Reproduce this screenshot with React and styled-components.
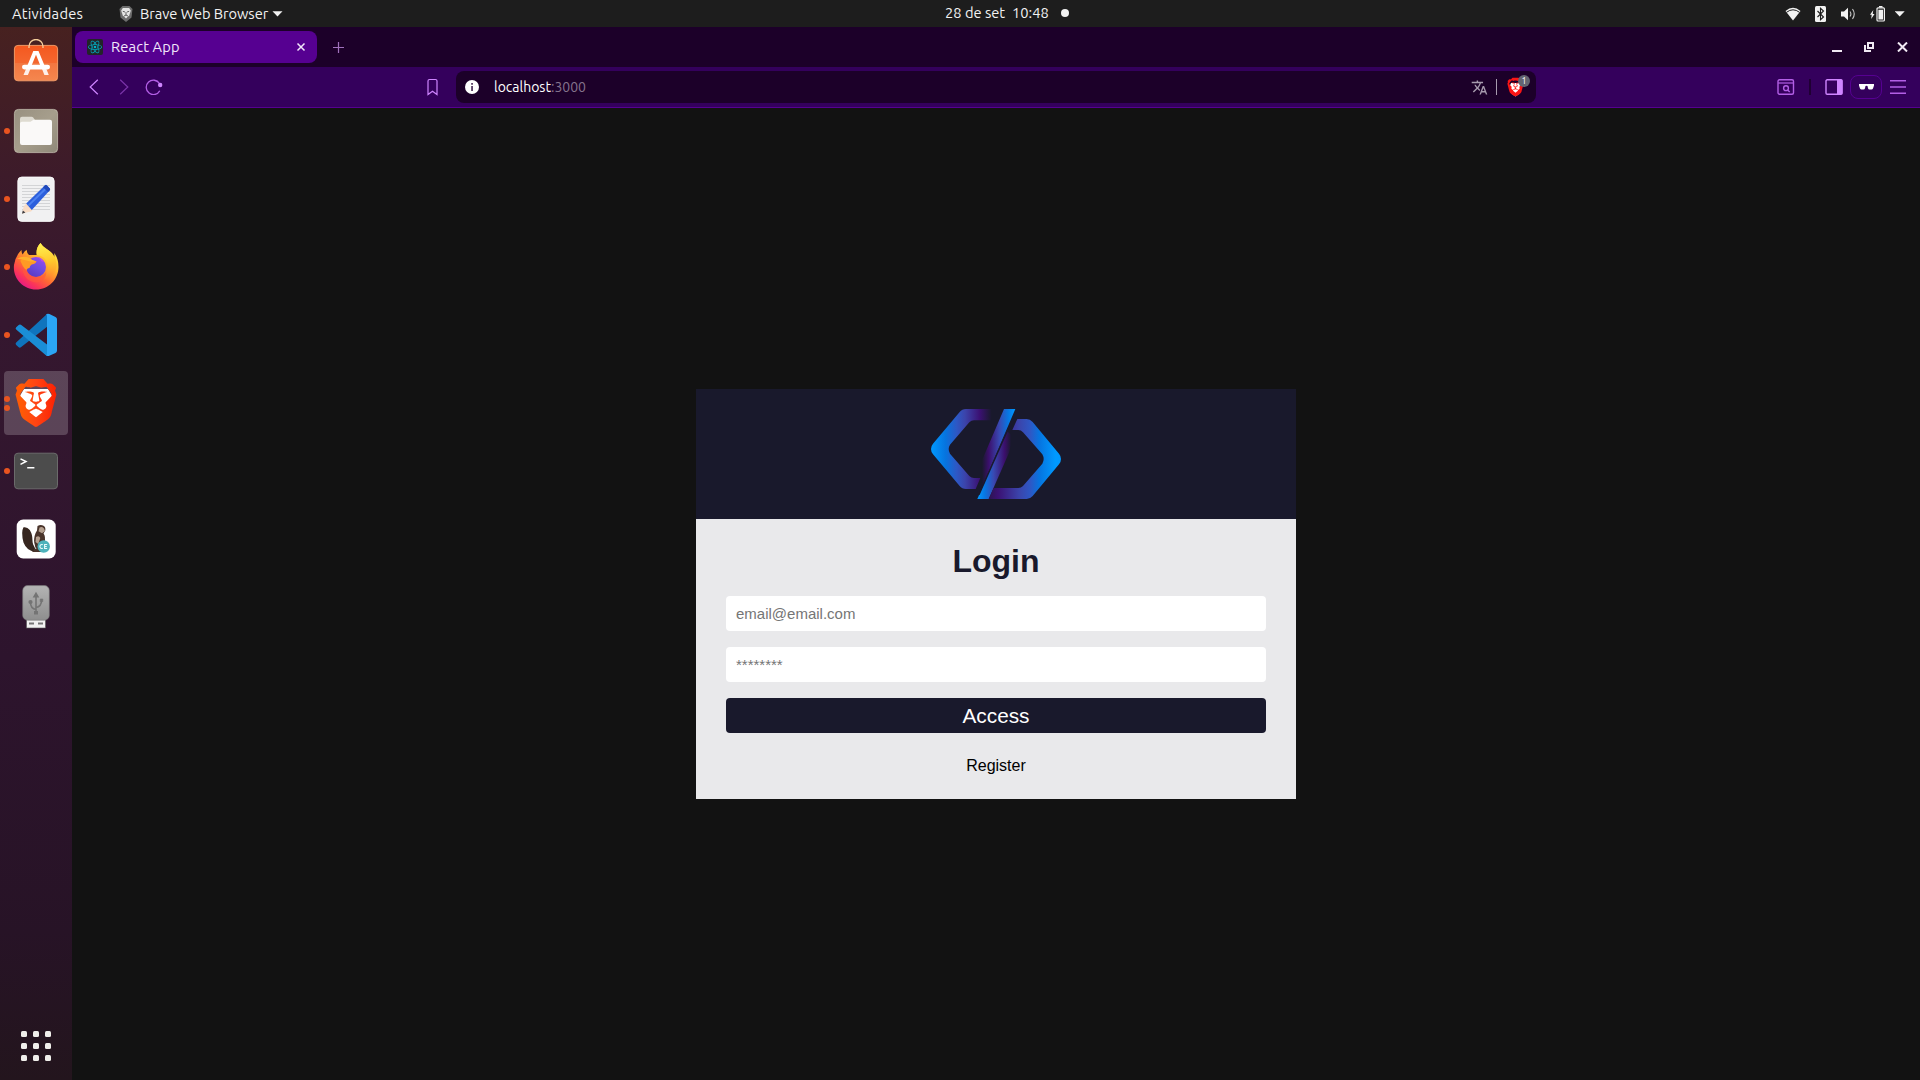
import React from "react";
import styled, { createGlobalStyle } from "styled-components";
import { SiBrave, SiReact } from "react-icons/si";
import { MdTranslate } from "react-icons/md";

const uiFont = `Ubuntu, "Open Sans", "Noto Sans", sans-serif`;

const GlobalStyle = createGlobalStyle`
  * { box-sizing: border-box; }
  body { margin: 0; background: #121212; overflow: hidden; }
  svg { display: block; flex: none; }
`;

const Desktop = styled.div`
  display: flex;
  flex-direction: column;
  width: 1920px;
  height: 1080px;
  overflow: hidden;
  font-family: ${uiFont};
  font-size: 14px;
`;

const TopBar = styled.header`
  display: grid;
  grid-template-columns: 945px 1fr auto;
  align-items: center;
  height: 27px;
  flex: none;
  padding-right: 15px;
  background: #1d1d1d;
  color: #f2f2f2;
  font-size: 14.667px;
`;

const TopGroup = styled.div`
  display: flex;
  align-items: center;
  height: 27px;
  padding-left: ${(p) => p.$inset || 0}px;
  padding-bottom: ${(p) => p.$raise || 0}px;
  gap: ${(p) => p.$gap || 0}px;
`;

const Label = styled.span`
  width: ${(p) => (p.$w ? `${p.$w}px` : "auto")};
  margin-left: ${(p) => p.$before || 0}px;
  letter-spacing: ${(p) => p.$track || 0}px;
  color: ${(p) => p.$color || "inherit"};
  line-height: 20px;
  white-space: nowrap;
`;

const Dot = styled.i`
  width: ${(p) => p.$size}px;
  height: ${(p) => p.$size}px;
  border-radius: 50%;
  background: ${(p) => p.$color};
`;

const BatteryMenu = styled.div`
  display: flex;
  align-items: center;
  gap: 10px;
`;

const Workspace = styled.div`
  display: flex;
  flex: 1;
  min-height: 0;
`;

const Dock = styled.nav`
  display: flex;
  flex-direction: column;
  gap: 4px;
  width: 72px;
  flex: none;
  padding: 4px 4px 19px;
  background: linear-gradient(#472120 0%, #3d1b2a 14%, #35172f 28%, #2d142d 60%, #271326 86%, #23151d 100%);
`;

const DockItem = styled.div`
  display: grid;
  grid-template-columns: 8px 48px;
  align-items: center;
  height: 64px;
  border-radius: 4px;
  background: ${(p) => (p.$active ? "rgba(255,255,255,0.2)" : "transparent")};
`;

const Marks = styled.div`
  display: flex;
  flex-direction: column;
  gap: 3px;
`;

const AppsGrid = styled.div`
  display: grid;
  grid-template-columns: repeat(3, 6px);
  gap: 6px;
  margin: auto 0 0 17px;
`;

const AppsCell = styled.i`
  height: 6px;
  border-radius: 1.5px;
  background: #f0efeb;
`;

const BrowserWindow = styled.main`
  display: flex;
  flex-direction: column;
  flex: 1;
`;

const TabStrip = styled.div`
  display: flex;
  align-items: center;
  height: 40px;
  padding: 0 12px 0 3px;
  background: #1c0029;
`;

const Tab = styled.div`
  display: flex;
  align-items: center;
  width: 242px;
  height: 32px;
  padding: 0 11px 0 12px;
  gap: 8px;
  border-radius: 8px;
  background: #560091;
  color: #f3e8fb;
  font-size: 14.667px;
`;

const Favicon = styled.div`
  display: grid;
  place-items: center;
  width: 16px;
  height: 16px;
  border-radius: 2px;
  background: #222429;
  color: #00b3c8;
`;

const Push = styled.div`
  flex: 1;
`;

const NewTab = styled.div`
  margin-left: 16px;
`;

const WindowControls = styled.div`
  display: flex;
  gap: 22px;
  margin-left: auto;
`;

const Toolbar = styled.div`
  display: flex;
  align-items: center;
  height: 41px;
  padding: 0 14px 0 14px;
  border-bottom: 1px solid #560091;
  background: #34005c;
`;

const NavButtons = styled.div`
  display: flex;
  gap: 13.5px;
  width: 330px;
`;

const Bookmark = styled.div`
  width: 40px;
  padding-left: 10px;
`;

const AddressBar = styled.div`
  display: flex;
  align-items: center;
  width: 1080px;
  height: 32px;
  padding: 0 4px 0 9px;
  border-radius: 8px;
  background: #1c0029;
  color: #fff;
`;

const Host = styled.div`
  display: flex;
  flex: 1;
  padding-left: 15px;
`;

const Divider = styled.i`
  width: ${(p) => p.$w}px;
  height: 16px;
  margin: 0 ${(p) => p.$after}px 0 ${(p) => p.$before}px;
  background: ${(p) => p.$color};
`;

const Shield = styled.div`
  position: relative;
  width: 28px;
  height: 24px;
`;

const ShieldBadge = styled.span`
  position: absolute;
  top: 0;
  left: 14px;
  width: 12px;
  height: 12px;
  border-radius: 50%;
  background: #636571;
  color: #fff;
  font-size: 9px;
  line-height: 12px;
  text-align: center;
`;

const ToolButtons = styled.div`
  display: flex;
  align-items: center;
  margin-left: auto;
`;

const PrivateBadge = styled.div`
  display: grid;
  place-items: center;
  width: 32px;
  height: 24px;
  margin: 0 8px 0 7px;
  border: 1px solid #560091;
  border-radius: 8px;
`;

const Page = styled.section`
  display: flex;
  align-items: center;
  justify-content: center;
  flex: 1;
  background: #121212;
  font-family: Arial, "Liberation Sans", sans-serif;
`;

const Card = styled.div`
  width: 600px;
  background: #e9e9eb;
`;

const CardHeader = styled.div`
  display: flex;
  align-items: center;
  justify-content: center;
  height: 130px;
  background: #19192c;
`;

const Form = styled.form`
  display: flex;
  flex-direction: column;
  height: 280px;
  padding: 24px 30px 0;
  gap: 16px;
`;

const Title = styled.h1`
  margin: 0;
  height: 37px;
  color: #19192c;
  font-size: 32px;
  line-height: 37px;
  font-weight: 700;
  text-align: center;
`;

const Field = styled.input`
  height: 35px;
  padding: 0 10px;
  border: 0;
  border-radius: 4px;
  outline: 0;
  background: #fff;
  font: 15px Arial, "Liberation Sans", sans-serif;
  &::placeholder { color: #757575; }
`;

const Submit = styled.button`
  height: 35px;
  padding: 0;
  border: 0;
  border-radius: 4px;
  background: #19192c;
  color: #fff;
  font: 20.8px Arial, "Liberation Sans", sans-serif;
`;

const RegisterLink = styled.a`
  margin-top: 8px;
  color: #000;
  font-size: 16px;
  line-height: 18px;
  text-align: center;
`;

const Icon = ({ w, h = w, box, children, ...rest }) => (
  <svg width={w} height={h} viewBox={box || `0 0 ${w} ${h}`} fill="none" {...rest}>
    {children}
  </svg>
);

const SoftwareIcon = () => (
  <Icon w={48}>
    <defs>
      <linearGradient id="soft" x1="0" y1="0" x2="0" y2="1">
        <stop offset="0" stopColor="#f4581f" />
        <stop offset="0.5" stopColor="#f4672f" />
        <stop offset="0.5" stopColor="#f27640" />
        <stop offset="1" stopColor="#f5874f" />
      </linearGradient>
    </defs>
    <rect x="2.4" y="6.4" width="43.2" height="35.4" rx="3.5" fill="url(#soft)" stroke="#f8a26c" strokeWidth="0.9" />
    <path d="M17 9V7.500a7 7 0 0 1 14 0V9" stroke="#f6cf9c" strokeWidth="1.300" />
    <path d="M21.3 12h5.2l5.8 14h-4.2L24 15.8 19.8 26h-4.2z" fill="#fff" />
    <path d="M14 30h4.4l-2.5 6h-4.4zM30 30h4.4l2.4 6h-4.4z" fill="#fff" fillOpacity=".88" />
    <rect x="10" y="25.8" width="28" height="4.6" rx="2.3" fill="#fff" />
  </Icon>
);

const FilesIcon = () => (
  <Icon w={48}>
    <defs>
      <linearGradient id="files" x1="0" y1="0" x2="1" y2="1">
        <stop offset="0" stopColor="#989080" />
        <stop offset="0.5" stopColor="#a69e8c" />
        <stop offset="1" stopColor="#8f8979" />
      </linearGradient>
    </defs>
    <rect x="2.4" y="2.4" width="43.2" height="43.2" rx="4" fill="url(#files)" stroke="#c3bdad" strokeWidth="0.8" />
    <path d="M8 17v-5.2Q8 9.8 10 9.8h9.5q1.2 0 1.9.9l1.6 2.3v4z" fill="#dedbd1" />
    <path d="M8 16.5q0-1.8 2-1.8h8.500l3-1.900H38q2 0 2 2V36q0 2-2 2H10q-2 0-2-2z" fill="#faf9f8" />
  </Icon>
);

const EditorIcon = () => (
  <Icon w={48}>
    <rect x="5.8" y="2" width="36.4" height="44.4" rx="4" fill="#f1f1f2" stroke="#fff" strokeWidth="0.8" />
    <path d="M10 10.5h28M10 13.5h28M10 16.5h28M10 19.5h28M10 22.5h28M10 25.5h28M10 28.5h28M10 31.5h28M10 34.5h28" stroke="#cfd0d2" strokeWidth="0.9" />
    <path d="M10 38.8l1.8-7.6L20 36z" fill="#f8dcc5" />
    <path d="M12 31l5.8 5.8 2.6-1.6-5.7-6.8z" fill="#f8dcc5" />
    <path d="M10 38.8l.8-3.2 2.6 2z" fill="#3c3c42" />
    <path d="M14.2 28.6L33 10.2q1.1-.8 2 .2l2.8 3q.8 1-.2 2L19.8 35z" fill="#2c5fdc" />
    <path d="M16.3 30.6L35.5 12" stroke="#4b80f0" strokeWidth="2" />
    <path d="M31 12.2l1.8-1.8q1.2-1 2.2 0l2.8 3q.8 1-.2 2L36 17z" fill="#1f48ba" />
  </Icon>
);

const FirefoxIcon = () => (
  <Icon w={48}>
    <defs>
      <linearGradient id="ffBody" x1="38" y1="6" x2="10" y2="44" gradientUnits="userSpaceOnUse">
        <stop offset="0" stopColor="#ffe843" />
        <stop offset="0.3" stopColor="#ffb52c" />
        <stop offset="0.58" stopColor="#ff6a33" />
        <stop offset="0.8" stopColor="#fb3658" />
        <stop offset="1" stopColor="#e3168b" />
      </linearGradient>
      <linearGradient id="ffTail" x1="32" y1="0" x2="38" y2="38" gradientUnits="userSpaceOnUse">
        <stop offset="0" stopColor="#fff251" />
        <stop offset="0.5" stopColor="#ffc72c" />
        <stop offset="1" stopColor="#ff7a2c" stopOpacity="0" />
      </linearGradient>
      <linearGradient id="ffGlobe" x1="30" y1="14" x2="18" y2="34" gradientUnits="userSpaceOnUse">
        <stop offset="0" stopColor="#9a4bf0" />
        <stop offset="0.5" stopColor="#6b4be0" />
        <stop offset="1" stopColor="#5a39c0" />
      </linearGradient>
    </defs>
    <path d="M28.500 0C25 3.500 24 8 24.800 12L17 12Q14.500 9.500 14.800 6.800Q12.400 8.200 10.600 11.400Q9.200 9 9.600 6.800Q3 13.500 2 22C.5 35 11 46.500 24 46.500C37 46.500 46.500 36 46.500 24Q46.500 15.500 42.200 10Q42.600 12.500 42 15Q39.500 8.500 34.500 5.800Q30.500 3.500 28.500 0Z" fill="url(#ffBody)" />
    <path d="M28.500 0C25 3.500 24 8 24.800 12Q33.500 13 35.800 21Q37.500 31 29 36.500Q43 36 44.600 23Q44.500 12 36 7Q30.500 4 28.500 0Z" fill="url(#ffTail)" />
    <circle cx="24" cy="24" r="10" fill="url(#ffGlobe)" />
    <path d="M25 14Q29.500 14.500 32 19L29.500 18.200Q28.500 15.500 25 14Z" fill="#c04ae8" />
    <path d="M8.300 17.800Q12 13.500 17.500 14.800Q19.500 17.500 24.500 18.200Q24.300 20.500 19.700 21.500Q17.800 22.500 17.500 25Q14.800 25 14.500 28Q10.500 24 8.300 17.800Z" fill="#ff9a24" />
    <path d="M5 16Q10 12 17.500 14.800Q19.500 17.500 24.500 18.200Q18 19 14.500 17.500Q9 15.500 5 16Z" fill="#ffb12b" />
    <path d="M14.300 26Q17 34.500 25 34.500Q31 34.300 34 29Q34.500 38 25 39.500Q12.500 39 10.500 26Z" fill="#ff5a3c" fillOpacity=".6" />
  </Icon>
);

const CodeIcon = () => (
  <Icon w={48}>
    <path d="M35 3L4.200 31.500q-1.300 1.200 0 2.400l2.500 2.300q1 .9 2.200.1L45 8z" fill="#0f74bd" />
    <path d="M4.200 16.200l2.500-2.300q1-.9 2.200-.1L37 35v10q-2 .4-3.500-1L4.200 18.500q-1.200-1.100 0-2.300z" fill="#1a8ed6" />
    <path d="M34 3.500q1.500-1.200 3.400-.4L43.500 6Q45 6.800 45 8.500v31q0 1.700-1.500 2.400l-6.200 2.900q-2 .8-3.500-.7 1.200.4 1.200-1.500V5.400q0-2.200-1-1.900z" fill="#2ba5f5" />
  </Icon>
);

const BraveIcon = () => (
  <Icon w={48}>
    <defs>
      <linearGradient id="brave" x1="0" y1="0" x2="24" y2="0" gradientUnits="userSpaceOnUse">
        <stop offset="0.2" stopColor="#ff5a06" />
        <stop offset="0.5" stopColor="#ff4414" />
        <stop offset="0.9" stopColor="#fb2303" />
      </linearGradient>
    </defs>
    <path d="M12 10h24l6 10-5 18-13 7-13-7-5-18z" fill="#fff" />
    <SiBrave size={48} fill="url(#brave)" strokeWidth="0" />
  </Icon>
);

const TerminalIcon = () => (
  <Icon w={48}>
    <rect x="2.500" y="6.200" width="43" height="35.600" rx="3.500" fill="#4c4c4c" stroke="#6b6b6b" />
    <path d="M8.500 11.800l5.500 2.700-5.500 2.800M15.200 20.700h7.200" stroke="#fff" strokeWidth="1.500" />
  </Icon>
);

const BeaverIcon = () => (
  <Icon w={48}>
    <rect x="4.700" y="4.500" width="39" height="39" rx="6.500" fill="#fff" />
    <path d="M11.500 12.300Q15 11.500 17.800 15Q20.800 20 20.500 26Q20.500 30 24.500 34.500L23 37Q14.500 35.500 11.500 27.500Q8.800 17 11.500 12.300Z" fill="#36261f" />
    <path d="M25.500 11Q28.500 9.200 31.500 10.700Q33.800 12 33.300 15.500L31.500 18.500Q34 22 32.500 27L29 37H20Q24.500 33.500 22 28Q21.800 20 25 15.500Z" fill="#49342b" />
    <path d="M27.500 12.500q2.500-1.200 4.500 1l1 2.500-3 2.200-3.500-2zM24 22q3-2 4.300 1l-2 6-2.800-2z" fill="#b5a08f" />
    <path d="M21.700 18Q20.500 23 22 29Q22.500 32 24 34" stroke="#fff" strokeWidth="0.800" />
    <circle cx="31.700" cy="31.500" r="6.200" fill="#4db2bb" />
    <path d="M30.800 29.700a2 2 0 1 0 0 3.600M35.200 29.500h-2.600v4h2.600M32.600 31.500h2.200" stroke="#e8fafa" strokeWidth="1.100" />
  </Icon>
);

const UsbIcon = () => (
  <Icon w={48}>
    <defs>
      <linearGradient id="usb" x1="0" y1="0" x2="0" y2="1">
        <stop offset="0" stopColor="#b4b4b4" />
        <stop offset="1" stopColor="#8e8e8e" />
      </linearGradient>
    </defs>
    <rect x="14.500" y="35" width="19" height="10" fill="#f2f2f2" stroke="#555" strokeWidth="0.600" />
    <path d="M17 40.500h5M26 40.500h5" stroke="#777" strokeWidth="1.800" />
    <rect x="10.700" y="2.600" width="26.600" height="34.600" rx="5" fill="url(#usb)" stroke="#777" strokeWidth="0.600" />
    <g stroke="#747474" strokeWidth="1.600">
      <path d="M24 12v17M24 26.500q-5.500-1-5.500-7M24 24.500q5.500-1 5.500-7" />
      <circle cx="18.500" cy="19" r="1.300" fill="#747474" />
      <path d="M28.200 16h2.600v2.600h-2.600z" fill="#747474" strokeWidth=".6" />
    </g>
    <path d="M24 8.800l3.300 5.700h-6.600zM22 28h4v3.500h-4z" fill="#747474" />
  </Icon>
);

const dockApps = [
  { icon: SoftwareIcon, windows: 0 },
  { icon: FilesIcon, windows: 1 },
  { icon: EditorIcon, windows: 1 },
  { icon: FirefoxIcon, windows: 1 },
  { icon: CodeIcon, windows: 1 },
  { icon: BraveIcon, windows: 2, active: true },
  { icon: TerminalIcon, windows: 1 },
  { icon: BeaverIcon, windows: 0 },
  { icon: UsbIcon, windows: 0 },
];

const Logo = () => (
  <Icon w={130} h={90} box="63 42 390 270">
    <defs>
      <linearGradient id="lgLeft" x1="63" y1="0" x2="245" y2="0" gradientUnits="userSpaceOnUse">
        <stop offset="0" stopColor="#0099ff" />
        <stop offset="0.24" stopColor="#0674df" />
        <stop offset="0.42" stopColor="#2d58c5" />
        <stop offset="0.56" stopColor="#3b44ab" />
        <stop offset="0.8" stopColor="#3b1173" />
        <stop offset="1" stopColor="#19192c" />
      </linearGradient>
      <linearGradient id="lgUp" x1="216" y1="0" x2="316" y2="0" gradientUnits="userSpaceOnUse">
        <stop offset="0" stopColor="#19192c" />
        <stop offset="0.2" stopColor="#3b0f6c" />
        <stop offset="0.52" stopColor="#3949b2" />
        <stop offset="0.78" stopColor="#0876e2" />
        <stop offset="1" stopColor="#0099ff" />
      </linearGradient>
      <linearGradient id="lgDown" x1="202" y1="0" x2="304" y2="0" gradientUnits="userSpaceOnUse">
        <stop offset="0" stopColor="#0099ff" />
        <stop offset="0.22" stopColor="#0876e2" />
        <stop offset="0.48" stopColor="#3949b2" />
        <stop offset="0.8" stopColor="#3b0f6c" />
        <stop offset="1" stopColor="#19192c" />
      </linearGradient>
      <linearGradient id="lgRight" x1="236" y1="0" x2="453" y2="0" gradientUnits="userSpaceOnUse">
        <stop offset="0" stopColor="#2c1450" />
        <stop offset="0.13" stopColor="#3b1173" />
        <stop offset="0.42" stopColor="#3b44ab" />
        <stop offset="0.58" stopColor="#2d58c5" />
        <stop offset="0.7" stopColor="#0674df" />
        <stop offset="0.92" stopColor="#0099ff" />
      </linearGradient>
    </defs>
    <path d="M245 42H168Q156 42 149 51L69 146Q63 153 63 162Q63 171 69 178L149 273Q156 282 168 282H197L211 249H192Q184 249 178 243L120 176Q112 162 120 149L178 82Q184 76 192 76H245Z" fill="url(#lgLeft)" />
    <path d="M282 42H316L210 290L216 250V196Z" fill="url(#lgUp)" />
    <path d="M202 312H236L298 171L302 150V118L290 108Z" fill="url(#lgDown)" />
    <path d="M298 94L207 299" stroke="#19192c" strokeWidth="4" />
    <path d="M322 72H350Q360 72 368 81L447 176Q453 183 453 192Q453 201 447 208L368 303Q360 312 350 312H236L251 279H325Q333 279 339 273L397 206Q405 192 397 178L339 112Q333 105 325 105H307Z" fill="url(#lgRight)" />
  </Icon>
);

const PURPLE = "#b35fe6";
const BRIGHT = "#cf85ff";

export default function App() {
  return (
    <Desktop>
      <GlobalStyle />
      <TopBar>
        <TopGroup $inset={12}>
          <Label $w={107} $track={0.25}>Atividades</Label>
          <Icon w={14} h={18} box="0 0 14 18">
            <path d="M3.500 1h7L13.500 4l-1 8.500L7 17l-5.500-4.500L.5 4z" fill="#6d6d6d" />
            <path d="M3.800 3h6.400l1.600 2.800-1.500 4.400L7 13.500l-3.300-3.300L2.200 5.800z" fill="#e6e6e6" />
            <path d="M3.800 6.300L6 7M10.200 6.300L8 7M7 7v3.500M5 11l2-1 2 1" stroke="#555" strokeWidth="0.900" />
          </Icon>
          <Label $w={132} $before={7} $track={-0.05}>Brave Web Browser</Label>
          <Icon w={11} h={6}>
            <path d="M.5 .3h10l-5 5.200z" fill="#f2f2f2" />
          </Icon>
        </TopGroup>
        <TopGroup $raise={1}>
          <Label $w={67}>28 de set</Label>
          <Label $w={49}>10:48</Label>
          <Dot $size={8} $color="#f2f2f2" />
        </TopGroup>
        <TopGroup $gap={14}>
          <Icon w={16} h={14}>
            <path d="M8 13.500L.5 4Q8-2.500 15.500 4z" fill="#f2f2f2" />
            <path d="M1.500 5.300Q8 .3 14.500 5.300" stroke="#1d1d1d" strokeWidth="1" />
          </Icon>
          <Icon w={12} h={16}>
            <rect width="11" height="16" rx="1.500" fill="#f2f2f2" />
            <path d="M2.500 5l6 6-3 2.700V2.300L8.500 5l-6 6" stroke="#1d1d1d" strokeWidth="1.100" />
          </Icon>
          <Icon w={15} h={14}>
            <path d="M0 4.500h3L7 .8v12.400L3 9.500H0z" fill="#f2f2f2" />
            <path d="M9 4.500q1.800 2.500 0 5M11.500 2q3.500 5 0 10" stroke="#c8c8c8" strokeWidth="1.100" />
          </Icon>
          <BatteryMenu>
            <Icon w={15} h={16}>
              <path d="M3.300 4L0 8.700h1.700L1.200 13l3.300-5H2.700z" fill="#f2f2f2" />
              <rect x="7" y="1.800" width="7.400" height="13.200" rx="1" stroke="#f2f2f2" strokeWidth="1.200" />
              <path d="M9 0h3.500v1.500H9zM8.400 3.800h4.600v9.600H8.400z" fill="#f2f2f2" />
            </Icon>
            <Icon w={10} h={6} box="1 0 10 6">
              <path d="M.7.3h10l-5 5.200z" fill="#f2f2f2" />
            </Icon>
          </BatteryMenu>
        </TopGroup>
      </TopBar>
      <Workspace>
        <Dock>
          {dockApps.map(({ icon: AppIcon, windows, active }, i) => (
            <DockItem key={i} $active={active}>
              <Marks>
                {Array.from({ length: windows }, (_, n) => (
                  <Dot key={n} $size={6} $color="#e95420" />
                ))}
              </Marks>
              <AppIcon />
            </DockItem>
          ))}
          <AppsGrid>
            {Array.from({ length: 9 }, (_, i) => (
              <AppsCell key={i} />
            ))}
          </AppsGrid>
        </Dock>
        <BrowserWindow>
          <TabStrip>
            <Tab>
              <Favicon><SiReact size={14} /></Favicon>
              <Label $track={0.15}>React App</Label>
              <Push />
              <Icon w={10}>
                <path d="M1.500 1.500l7 7M8.500 1.500l-7 7" stroke="#f3e8fb" strokeWidth="1.500" />
              </Icon>
            </Tab>
            <NewTab>
              <Icon w={11}>
                <path d="M5.500 0v11M0 5.500h11" stroke="#a071bd" strokeWidth="1.200" />
              </Icon>
            </NewTab>
            <WindowControls>
              <Icon w={10}><path d="M0 9h10" stroke="#f0e9f3" strokeWidth="2" /></Icon>
              <Icon w={10}>
                <path d="M4 1h5v5H4zM1 3v6h6" stroke="#f0e9f3" strokeWidth="2" />
              </Icon>
              <Icon w={12} h={10}><path d="M2 .5l9 9M11 .5l-9 9" stroke="#f0e9f3" strokeWidth="2" /></Icon>
            </WindowControls>
          </TabStrip>
          <Toolbar>
            <NavButtons>
              <Icon w={16}><path d="M11.800 .7L4.200 8l7.600 7.300" stroke={BRIGHT} strokeWidth="1.200" /></Icon>
              <Icon w={16}><path d="M4.200 .7L11.800 8l-7.600 7.300" stroke="#7a33a8" strokeWidth="1.200" /></Icon>
              <Icon w={18} h={16}>
                <path d="M14.500 4.500a7.200 7.200 0 1 0 .3 7.300" stroke={PURPLE} strokeWidth="1.300" />
                <circle cx="15.200" cy="6" r="2.200" fill={BRIGHT} />
              </Icon>
            </NavButtons>
            <Bookmark>
              <Icon w={14} h={18}>
                <path d="M2 3q0-1.500 1.500-1.500h6q1.500 0 1.500 1.500v13.500l-4.500-3.200-4.500 3.200z" stroke={BRIGHT} strokeWidth="1.200" />
              </Icon>
            </Bookmark>
            <AddressBar>
              <Icon w={14}>
                <circle cx="7" cy="7" r="7" fill="#fff" />
                <path d="M6.200 3h1.700v1.700H6.200zM6.200 6h1.700v5H6.200z" fill="#4b2f58" />
              </Icon>
              <Host>
                <Label>localhost</Label>
                <Label $color="#85738d">:3000</Label>
              </Host>
              <MdTranslate size={17} color="#a79bae" />
              <Divider $w={1} $before={8} $after={7} $color="#a79bae" />
              <Shield>
                <Icon w={22} h={24}>
                  <path d="M7 8h9l2 5-3 6-3.500 2.500L8 19l-3-6z" fill="#fff" />
                  <SiBrave x={2} y={2.500} size={19} fill="#fa1515" strokeWidth="0" />
                </Icon>
                <ShieldBadge>1</ShieldBadge>
              </Shield>
            </AddressBar>
            <ToolButtons>
              <Icon w={18} h={16}>
                <rect x="1" y=".7" width="15.500" height="14.600" rx="1.500" stroke={PURPLE} strokeWidth="1.400" />
                <path d="M1 4h15.500" stroke={PURPLE} strokeWidth="1.200" />
                <circle cx="9" cy="9.200" r="2.400" stroke={PURPLE} strokeWidth="1.400" />
                <path d="M10.700 10.900l2 2" stroke={PURPLE} strokeWidth="1.400" />
              </Icon>
              <Divider $w={2} $before={14} $after={14} $color="#1f0033" />
              <Icon w={18} h={16}>
                <rect x="1" y=".8" width="16" height="14.400" rx="1.200" stroke={BRIGHT} strokeWidth="1.400" />
                <path d="M12 .5h4.500q1 0 1 1v13q0 1-1 1H12z" fill={BRIGHT} />
              </Icon>
              <PrivateBadge>
                <Icon w={15} h={6}>
                  <path d="M0 0h15v1.500l-1 3q-.5 1-1.500 1h-2Q9.300 5.500 9 4.300L8.500 2q-1-.7-2 0L6 4.300q-.3 1.200-1.500 1.200h-2Q1.500 5.500 1 4.500L0 1.500z" fill="#fff" />
                </Icon>
              </PrivateBadge>
              <Icon w={16} h={14}><path d="M0 .8h16M0 7h16M0 13.200h16" stroke={PURPLE} strokeWidth="1.500" /></Icon>
            </ToolButtons>
          </Toolbar>
          <Page>
            <Card>
              <CardHeader><Logo /></CardHeader>
              <Form>
                <Title>Login</Title>
                <Field placeholder="email@email.com" />
                <Field type="password" placeholder="********" />
                <Submit type="button">Access</Submit>
                <RegisterLink>Register</RegisterLink>
              </Form>
            </Card>
          </Page>
        </BrowserWindow>
      </Workspace>
    </Desktop>
  );
}
